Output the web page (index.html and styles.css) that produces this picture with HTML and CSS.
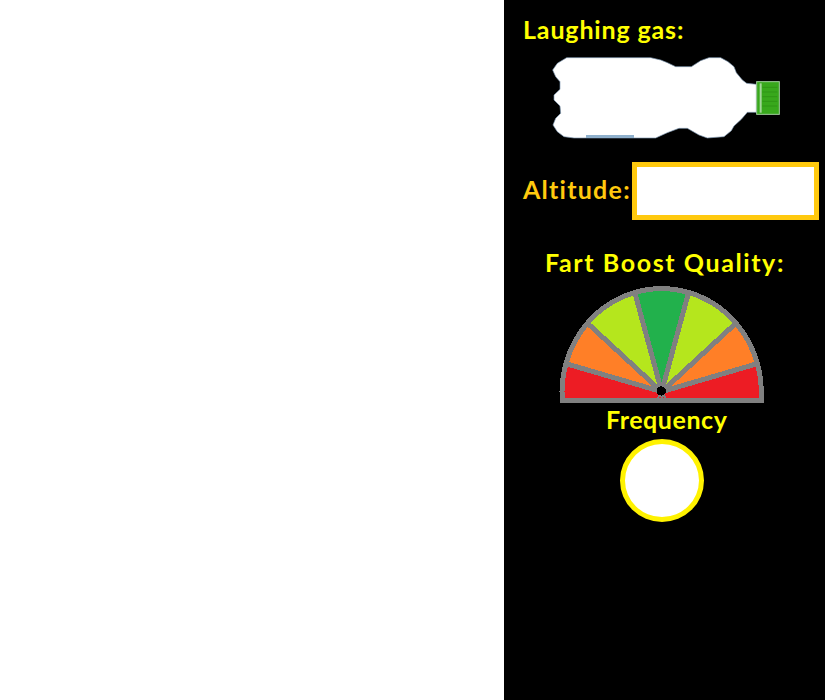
FILE: index.html
```html
<!DOCTYPE html>
<html lang="en">
<head>
<meta charset="utf-8">
<title>Fart Boost</title>
<link rel="stylesheet" href="styles.css">
</head>
<body>
<main class="stage"></main>
<aside class="panel">
  <h2 class="label label-gas">Laughing gas:</h2>
  <svg class="bottle" viewBox="135 165 700 255" width="233.33" height="85" aria-hidden="true">
    <path class="bottle-body" d="M188 173L440 173L470 180L490 188L515 200L562 200L590 182L615 173L650 173L672 185L690 200L697 218L715 240L728 250L757 253L757 337L730 337L712 358L690 378L682 392L660 410L610 414L585 405L550 385L525 385L490 398L455 414L210 414L180 410L160 395L147 375L155 355L170 340L168 318L150 300L150 285L168 268L168 245L155 230L146 210L160 190Z"/>
    <rect class="bottle-base" x="246" y="405" width="144" height="9"/>
    <rect class="bottle-cap" x="758" y="245" width="68" height="98"/>
    <rect class="bottle-band" x="767" y="250" width="6" height="88"/>
    <path class="bottle-ribs" d="M775 262H820M775 276H820M775 290H820M775 304H820M775 318H820"/>
  </svg>
  <div class="altitude">
    <h2 class="label label-alt">Altitude:</h2>
    <div class="alt-box"></div>
  </div>
  <h2 class="label label-quality">Fart Boost Quality:</h2>
  <svg class="gauge" viewBox="0 0 675 390" width="225" height="130" aria-hidden="true">
    <path class="w red" d="M36 360L36 335A298 309 0 0 1 48 251L335 335L622 251A298 309 0 0 1 634 335L634 360Z"/>
    <path class="w orange" d="M335 335L48 251A298 309 0 0 1 112.400 129.500Z"/>
    <path class="w lime" d="M335 335L112.400 129.500A298 309 0 0 1 254.300 37.500Z"/>
    <path class="w green" d="M335 335L254.300 37.500A298 309 0 0 1 415.700 37.500Z"/>
    <path class="w lime" d="M335 335L415.700 37.500A298 309 0 0 1 557.600 129.500Z"/>
    <path class="w orange" d="M335 335L557.600 129.500A298 309 0 0 1 622 251Z"/>
    <path class="base" d="M30 361L640 361"/>
    <circle class="hub" cx="334" cy="333" r="14"/>
  </svg>
  <h2 class="label label-freq">Frequency</h2>
  <div class="freq-dial"></div>
</aside>
</body>
</html>
```
FILE: styles.css
```css
html, body {
  margin: 0;
  height: 100%;
  background: #fff;
  overflow: hidden;
}
body {
  display: flex;
  height: 700px;
}
.stage {
  width: 504px;
  flex: none;
  background: #fff;
}
.panel {
  width: 321px;
  flex: none;
  height: 700px;
  background: #000;
  padding-top: 14px;
  box-sizing: border-box;
  font-family: "Comic Sans MS", "Lato", "Open Sans", sans-serif;
}
.label {
  margin: 0;
  font-size: 25px;
  font-weight: 700;
  line-height: 30px;
  color: #ff0;
  white-space: nowrap;
}
.label-gas {
  padding-left: 19px;
  letter-spacing: 0.85px;
}
.bottle {
  display: block;
  margin: 11px 0 0 45px;
}
.bottle-body {
  fill: #fff;
  stroke: #7d97b0;
  stroke-width: 2;
}
.bottle-base { fill: #8fb0cc; }
.bottle-cap {
  fill: #38a81c;
  stroke: #a3cfa0;
  stroke-width: 3;
}
.bottle-band { fill: #a3d59a; }
.bottle-ribs {
  stroke: #2f9616;
  stroke-width: 3;
  fill: none;
}
.altitude {
  display: flex;
  align-items: center;
  margin-top: 22px;
  padding-left: 19px;
}
.label-alt {
  width: 109px;
  flex: none;
  margin-top: -4px;
  color: #ffc90e;
  letter-spacing: 1.25px;
}
.alt-box {
  width: 177px;
  height: 48px;
  background: #fff;
  border: 5px solid #ffc90e;
}
.label-quality {
  margin-top: 27px;
  padding-left: 41px;
  letter-spacing: 1.6px;
}
.gauge {
  display: block;
  margin: 3px 0 0 46px;
  shape-rendering: crispEdges;
}
.w {
  stroke: #808080;
  stroke-width: 15;
  stroke-linejoin: miter;
}
.red { fill: #ed1c24; }
.orange { fill: #ff7f27; }
.lime { fill: #b5e61d; }
.green { fill: #22b14c; }
.base {
  stroke: #808080;
  stroke-width: 15;
  fill: none;
}
.hub { fill: #000; }
.label-freq {
  margin-top: -6px;
  padding-left: 102px;
  letter-spacing: 0.55px;
}
.freq-dial {
  width: 74px;
  height: 73px;
  margin: 5px 0 0 116px;
  background: #fff;
  border: 5px solid #fff200;
  border-radius: 50%;
}
```
